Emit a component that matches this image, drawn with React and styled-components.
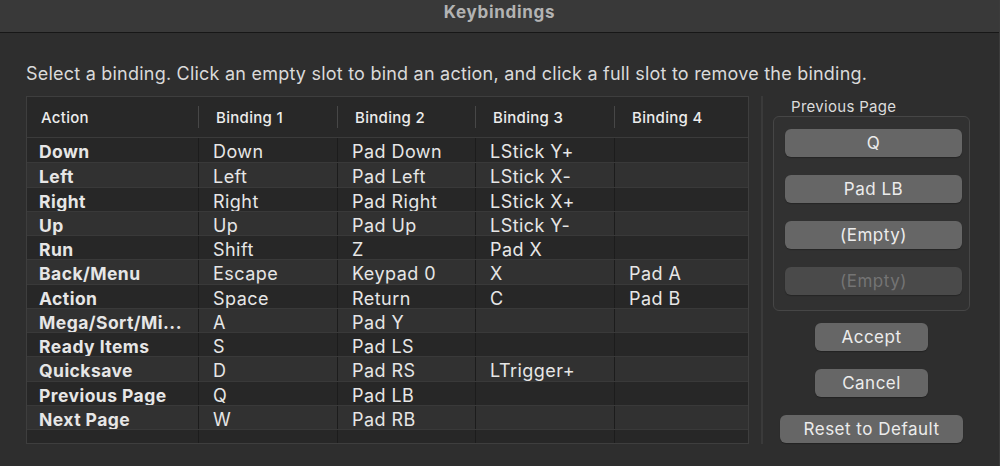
import React from 'react';
import styled, { createGlobalStyle } from 'styled-components';

const GlobalStyle = createGlobalStyle`
  html, body {
    margin: 0;
    padding: 0;
    background: #2e2e2e;
  }
  body {
    font-family: Inter, "Noto Sans", "Liberation Sans", sans-serif;
    -webkit-font-smoothing: antialiased;
  }
`;

const COLS = '171px 139px 138px 139px 1fr';

const rows = [
  ['Down', 'Down', 'Pad Down', 'LStick Y+', ''],
  ['Left', 'Left', 'Pad Left', 'LStick X-', ''],
  ['Right', 'Right', 'Pad Right', 'LStick X+', ''],
  ['Up', 'Up', 'Pad Up', 'LStick Y-', ''],
  ['Run', 'Shift', 'Z', 'Pad X', ''],
  ['Back/Menu', 'Escape', 'Keypad 0', 'X', 'Pad A'],
  ['Action', 'Space', 'Return', 'C', 'Pad B'],
  ['Mega/Sort/Mi...', 'A', 'Pad Y', '', ''],
  ['Ready Items', 'S', 'Pad LS', '', ''],
  ['Quicksave', 'D', 'Pad RS', 'LTrigger+', ''],
  ['Previous Page', 'Q', 'Pad LB', '', ''],
  ['Next Page', 'W', 'Pad RB', '', ''],
];

const Window = styled.div`
  width: 1000px;
  height: 466px;
  display: flex;
  flex-direction: column;
  background: #2e2e2e;
  overflow: hidden;
  box-sizing: border-box;
  border-right: 1px solid #3c3c3c;
`;

const TitleBar = styled.div`
  height: 33px;
  flex: none;
  box-sizing: border-box;
  background: #393939;
  border-bottom: 1px solid #171717;
  display: flex;
  align-items: center;
  justify-content: center;
  color: #b3b3b3;
  font-weight: 700;
  font-size: 17px;
  letter-spacing: 0.7px;
  padding-bottom: 8px;
`;

const Content = styled.div`
  flex: 1;
  padding: 29px 0 0 26px;
  display: flex;
  flex-direction: column;
`;

const Hint = styled.p`
  margin: 0;
  color: #dadada;
  font-size: 18px;
  letter-spacing: 0.22px;
  line-height: 23px;
`;

const Body = styled.div`
  display: flex;
  margin-top: 11px;
  height: 348px;
`;

const Table = styled.div`
  width: 723px;
  height: 348px;
  box-sizing: border-box;
  border: 1px solid #3e3e3e;
  background: #2a2a2a;
  display: flex;
  flex-direction: column;
  overflow: hidden;
`;

const HeaderRow = styled.div`
  display: grid;
  grid-template-columns: ${COLS};
  height: 40px;
  flex: none;
  background: #282828;
  border-bottom: 1px solid #3b3b3b;
`;

const HeaderCell = styled.div`
  display: flex;
  align-items: center;
  padding-left: ${p => (p.$first ? 14 : 18)}px;
  color: #ececec;
  font-size: 15px;
  letter-spacing: 0.3px;
  font-weight: 500;
  position: relative;
  &::before {
    content: '';
    display: ${p => (p.$first ? 'none' : 'block')};
    position: absolute;
    left: 0;
    top: 9px;
    bottom: 9px;
    width: 1px;
    background: #474747;
  }
`;

const BodyRows = styled.div`
  flex: 1;
  display: flex;
  flex-direction: column;
  background-color: #272727;
`;

const Row = styled.div`
  display: grid;
  grid-template-columns: ${COLS};
  height: 24.27px;
  flex: none;
  box-sizing: border-box;
  border-top: ${p => (p.$index === 0 ? 'none' : '1px solid #393939')};
  background: ${p => (p.$index % 2 === 1 ? '#313131' : '#272727')};
`;

const Cell = styled.div`
  padding-left: ${p => (p.$action ? 12 : 14)}px;
  color: #e6e6e6;
  font-size: ${p => (p.$action ? 17.5 : 18)}px;
  letter-spacing: ${p => (p.$action ? 0.45 : 0.45)}px;
  font-weight: ${p => (p.$action ? 700 : 400)};
  line-height: 27px;
  white-space: nowrap;
  overflow: hidden;
  border-left: ${p => (p.$action ? 'none' : '1px solid #1c1c1c')};
`;

const Divider = styled.div`
  width: 2px;
  margin-left: 12px;
  background: #3a3a3a;
  height: 348px;
`;

const Side = styled.div`
  flex: 1;
  display: flex;
  flex-direction: column;
  padding-left: 10px;
`;

const GroupLabel = styled.div`
  color: #dcdcdc;
  font-size: 15px;
  letter-spacing: 0.3px;
  line-height: 18px;
  padding-left: 18px;
  margin-top: 2px;
`;

const GroupBox = styled.div`
  width: 197px;
  height: 195px;
  box-sizing: border-box;
  margin-top: 0;
  border: 1px solid #464646;
  border-radius: 6px;
  background: #313131;
  padding: 12px 0 0 11px;
  display: flex;
  flex-direction: column;
  gap: 18px;
`;

const Button = styled.button`
  width: ${p => p.$width}px;
  height: 28px;
  margin: 0;
  padding: 0;
  border: none;
  border-radius: 6px;
  background: ${p => (p.disabled ? '#4a4a4a' : '#666666')};
  color: ${p => (p.disabled ? '#747474' : '#ececec')};
  font-family: inherit;
  font-size: 17px;
  letter-spacing: 0.5px;
  line-height: 28px;
  box-shadow: 0 1px 1px rgba(0, 0, 0, 0.25);
  cursor: default;
`;

const Actions = styled.div`
  display: flex;
  flex-direction: column;
  align-items: center;
  gap: 18px;
  width: 197px;
  margin-top: 12px;
`;

export default function App() {
  return (
    <>
      <GlobalStyle />
      <Window>
        <TitleBar>Keybindings</TitleBar>
        <Content>
          <Hint>
            Select a binding. Click an empty slot to bind an action, and click a full slot to remove the binding.
          </Hint>
          <Body>
            <Table>
              <HeaderRow>
                <HeaderCell $first>Action</HeaderCell>
                <HeaderCell>Binding 1</HeaderCell>
                <HeaderCell>Binding 2</HeaderCell>
                <HeaderCell>Binding 3</HeaderCell>
                <HeaderCell>Binding 4</HeaderCell>
              </HeaderRow>
              <BodyRows>
                {rows.map((r, i) => (
                  <Row key={r[0]} $index={i}>
                    {r.map((c, j) => (
                      <Cell key={j} $action={j === 0}>
                        {c}
                      </Cell>
                    ))}
                  </Row>
                ))}
                <Row $index={rows.length}>
                  {[0, 1, 2, 3, 4].map(j => (
                    <Cell key={j} $action={j === 0} />
                  ))}
                </Row>
              </BodyRows>
            </Table>
            <Divider />
            <Side>
              <GroupLabel>Previous Page</GroupLabel>
              <GroupBox>
                <Button $width={177}>Q</Button>
                <Button $width={177}>Pad LB</Button>
                <Button $width={177}>(Empty)</Button>
                <Button $width={177} disabled>
                  (Empty)
                </Button>
              </GroupBox>
              <Actions>
                <Button $width={113}>Accept</Button>
                <Button $width={113}>Cancel</Button>
                <Button $width={183}>Reset to Default</Button>
              </Actions>
            </Side>
          </Body>
        </Content>
      </Window>
    </>
  );
}
